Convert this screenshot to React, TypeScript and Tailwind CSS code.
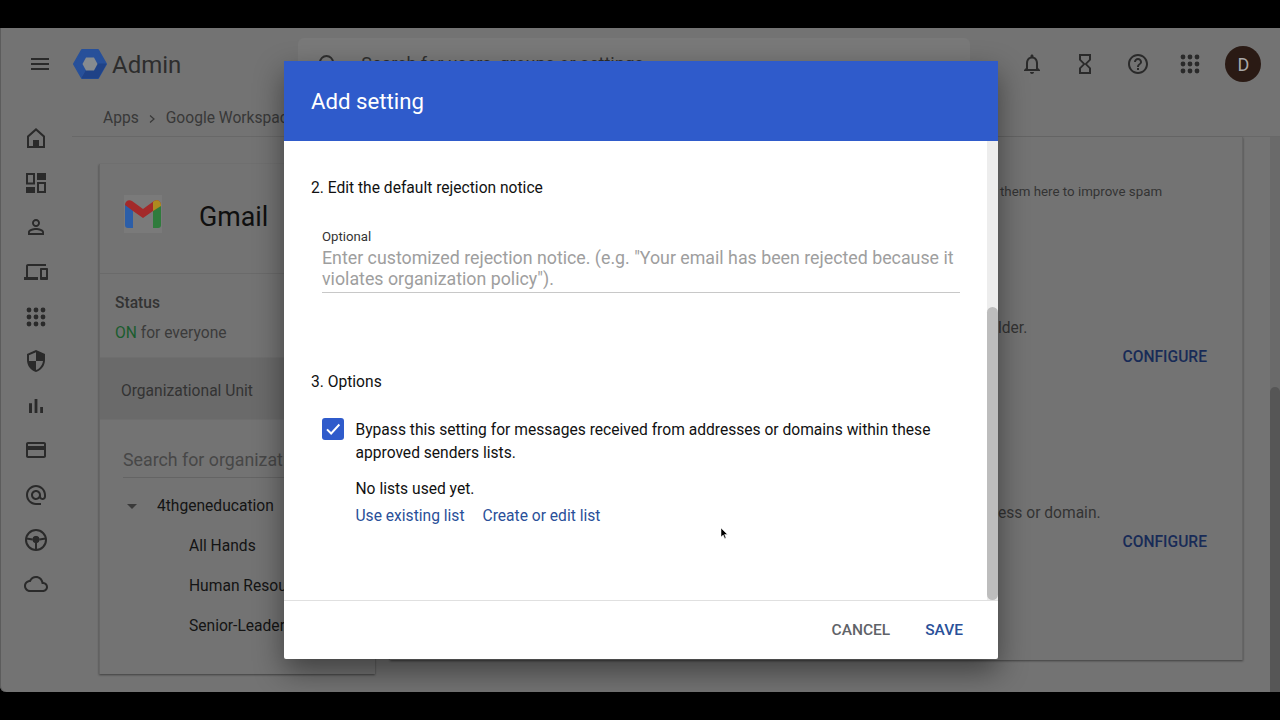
import type { ReactNode } from 'react';

function MatIcon({ d, size = 24 }: { d: string; size?: number }) {
  return (
    <svg width={size} height={size} viewBox="0 0 24 24" fill="currentColor" fillRule="evenodd">
      <path d={d} />
    </svg>
  );
}

function Dots({ size = 24 }: { size?: number }) {
  const spots = [5, 12, 19];
  return (
    <svg width={size} height={size} viewBox="0 0 24 24" fill="currentColor">
      {spots.map((y) => spots.map((x) => <circle key={x + '-' + y} cx={x} cy={y} r="2.4" />))}
    </svg>
  );
}

function Wheel() {
  return (
    <svg width="24" height="24" viewBox="0 0 24 24" fill="currentColor" stroke="currentColor" strokeWidth="2">
      <circle cx="12" cy="12" r="10" fill="none" />
      <circle cx="12" cy="11.5" r="3.2" strokeWidth="1" />
      <path d="M2.5 10.5l6 1M21.5 10.5l-6 1M12 14v8" fill="none" />
    </svg>
  );
}

const paths = {
  menu: 'M3 18h18v-2H3v2zm0-5h18v-2H3v2zm0-7v2h18V6H3z',
  home: 'M12 2L3 10v12h18V10L12 2zm0 2.7l7 6.2V20H5v-9.1l7-6.2zM9 14h6v6H9z',
  dashboard: 'M2 2h9v11.5H2V2zm2 2v7.5h5V4H4zm9-2h9v7h-9V2zm0 9h9v11h-9V11zm2 2v7h5v-7h-5zM2 16h9v6H2v-6z',
  person: 'M12 5.9c1.16 0 2.1.94 2.1 2.1s-.94 2.1-2.1 2.1S9.9 9.16 9.9 8s.94-2.1 2.1-2.1m0 9c2.97 0 6.1 1.46 6.1 2.1v1.1H5.9V17c0-.64 3.13-2.1 6.1-2.1M12 4C9.79 4 8 5.79 8 8s1.79 4 4 4 4-1.79 4-4-1.79-4-4-4zm0 9c-2.67 0-8 1.34-8 4v3h16v-3c0-2.66-5.33-4-8-4z',
  devices: 'M4 6h18V4H4c-1.1 0-2 .9-2 2v11H0v3h14v-3H4V6zm19 2h-6c-.55 0-1 .45-1 1v10c0 .55.45 1 1 1h6c.55 0 1-.45 1-1V9c0-.55-.45-1-1-1zm-1 9h-4v-7h4v7z',
  shield: 'M12 1L3 5v6c0 5.55 3.84 10.74 9 12 5.16-1.26 9-6.45 9-12V5l-9-4zm0 10.99h7c-.53 4.12-3.28 7.79-7 8.94V12H5V6.3l7-3.11v8.8z',
  bars: 'M5 9.2h3V19H5zM10.6 5h2.8v14h-2.8zm5.6 8H19v6h-2.8z',
  card: 'M20 4H4c-1.11 0-1.99.89-1.99 2L2 18c0 1.11.89 2 2 2h16c1.11 0 2-.89 2-2V6c0-1.11-.89-2-2-2zm0 14H4v-6h16v6zm0-10H4V6h16v2z',
  at: 'M12 2C6.48 2 2 6.48 2 12s4.48 10 10 10h5v-2h-5c-4.34 0-8-3.66-8-8s3.66-8 8-8 8 3.66 8 8v1.43c0 .79-.71 1.57-1.5 1.57s-1.5-.78-1.5-1.57V12c0-2.76-2.24-5-5-5s-5 2.24-5 5 2.24 5 5 5c1.38 0 2.64-.56 3.54-1.47.65.89 1.77 1.47 2.96 1.47 1.97 0 3.5-1.6 3.5-3.57V12c0-5.52-4.48-10-10-10zm0 13c-1.66 0-3-1.34-3-3s1.34-3 3-3 3 1.34 3 3-1.34 3-3 3z',
  cloud: 'M19.35 10.04C18.67 6.59 15.64 4 12 4 9.11 4 6.6 5.64 5.35 8.04 2.34 8.36 0 10.91 0 14c0 3.31 2.69 6 6 6h13c2.76 0 5-2.24 5-5 0-2.64-2.05-4.78-4.65-4.96zM19 18H6c-2.21 0-4-1.79-4-4 0-2.05 1.53-3.76 3.56-3.97l1.07-.11.5-.95C8.08 7.14 9.94 6 12 6c2.62 0 4.88 1.86 5.39 4.43l.3 1.5 1.53.11c1.56.1 2.78 1.41 2.78 2.96 0 1.65-1.35 3-3 3z',
  bell: 'M12 22c1.1 0 2-.9 2-2h-4c0 1.1.9 2 2 2zm6-6v-5c0-3.07-1.63-5.64-4.5-6.32V4c0-.83-.67-1.5-1.5-1.5s-1.5.67-1.5 1.5v.68C7.64 5.36 6 7.92 6 11v5l-2 2v1h16v-1l-2-2zm-2 1H8v-6c0-2.48 1.51-4.5 4-4.5s4 2.02 4 4.5v6z',
  hourglass: 'M6 2v6h.01L6 8.01 10 12l-4 4 .01.01H6V22h12v-5.99h-.01L18 16l-4-4 4-3.99-.01-.01H18V2H6zm10 14.5V20H8v-3.5l4-4 4 4zm-4-5l-4-4V4h8v3.5l-4 4z',
  help: 'M11 18h2v-2h-2v2zm1-16C6.48 2 2 6.48 2 12s4.48 10 10 10 10-4.48 10-10S17.52 2 12 2zm0 18c-4.41 0-8-3.59-8-8s3.59-8 8-8 8 3.59 8 8-3.59 8-8 8zm0-14c-2.21 0-4 1.79-4 4h2c0-1.1.9-2 2-2s2 .9 2 2c0 2-3 1.75-3 5h2c0-2.25 3-2.5 3-5 0-2.21-1.79-4-4-4z',
};

const railIcons: ReactNode[] = [
  <MatIcon d={paths.home} />,
  <MatIcon d={paths.dashboard} />,
  <MatIcon d={paths.person} />,
  <MatIcon d={paths.devices} />,
  <Dots />,
  <MatIcon d={paths.shield} />,
  <MatIcon d={paths.bars} />,
  <MatIcon d={paths.card} />,
  <MatIcon d={paths.at} />,
  <Wheel />,
  <MatIcon d={paths.cloud} />,
];

function AdminLogo() {
  return (
    <svg width="34" height="30" viewBox="0 0 34 30">
      <polygon points="9,1 25,1 33,15 25,29 9,29 1,15" fill="#27509a" stroke="#27509a" strokeWidth="2" strokeLinejoin="round" />
      <polygon points="17,15 33,15 25,29 9,29" fill="#1f4287" stroke="#1f4287" strokeWidth="1" strokeLinejoin="round" />
      <polygon points="13,8.5 21,8.5 24.5,15 21,21.5 13,21.5 9.5,15" fill="#868b8f" />
    </svg>
  );
}

function GmailLogo() {
  return (
    <div className="w-[38px] h-[38px] bg-[#7a7a7a] flex items-center justify-center">
      <svg width="36" height="28" viewBox="0 0 36 28">
        <path d="M0 4v21a3 3 0 0 0 3 3h5V9z" fill="#2c5ea8" />
        <path d="M28 9v19h5a3 3 0 0 0 3-3V4z" fill="#2f7b3c" />
        <path d="M0 5C0 1 4-1 7 1l11 8 11-8c3-2 7 0 7 4l-8 6-10 7-10-7z" fill="#a32a2a" />
        <path d="M28 2l1-1c3-2 7 0 7 4v1l-8 5z" fill="#ad8a1f" />
      </svg>
    </div>
  );
}

function OrgRow({ label }: { label: string }) {
  return <div className="h-10 flex items-center pl-[89px] text-[15.6px] text-[#141414] whitespace-nowrap">{label}</div>;
}

function LeftCard() {
  return (
    <div className="w-[276px] h-[510px] mt-[27px] ml-[27px] shrink-0 bg-[#737373] border-l border-[#666666] shadow-[0_1px_2px_rgba(0,0,0,0.45)] overflow-hidden">
      <div className="h-[110px] flex items-center gap-[37px] pl-6 pb-[10px] border-b border-[#6a6a6a]">
        <GmailLogo />
        <span className="mt-2 text-[26.8px] text-[#0f0f0f]">Gmail</span>
      </div>
      <div className="h-[83px] pl-[15px] pt-[19px]">
        <div className="text-[15.6px] leading-5 font-medium text-[#333333]">Status</div>
        <div className="text-[15.6px] leading-5 mt-[10px] text-[#3b3b3b]">
          <span className="text-[#1a5c2e]">ON</span> for everyone
        </div>
      </div>
      <div className="h-[63px] pl-[21px] pt-[6px] flex items-center bg-[#6a6a6a] text-[15.6px] text-[#333333] border-y border-[#6e6e6e]">
        Organizational Unit
      </div>
      <div className="ml-[23px] mr-6 mt-[27px] pb-[3px] border-b border-[#646464] text-[17.8px] text-[#474747] whitespace-nowrap">
        Search for organizational units
      </div>
      <div className="h-10 mt-[9px] flex items-center whitespace-nowrap">
        <span className="ml-[27px] w-0 h-0 border-x-[5px] border-x-transparent border-t-[5px] border-t-[#3a3a3a]" />
        <span className="ml-[20px] text-[15.6px] text-[#141414]">4thgeneducation</span>
      </div>
      <OrgRow label="All Hands" />
      <OrgRow label="Human Resources" />
      <OrgRow label="Senior-Leadership" />
    </div>
  );
}

function RightCard() {
  return (
    <div className="w-[853px] h-[523px] ml-[15px] shrink-0 bg-[#737373] border-r border-[#666666] shadow-[0_1px_2px_rgba(0,0,0,0.45)] pl-[608px] text-[#333333] whitespace-nowrap flex flex-col">
      <div className="mt-[45px] h-5 leading-5 text-[13.3px] pl-[2px]">them here to improve spam</div>
      <div className="mt-[116px] h-5 leading-5 text-[15.6px]">lder.</div>
      <div className="mt-[9px] h-5 leading-5 text-[15.6px] font-medium text-[#182b57] self-end pr-[35px]">CONFIGURE</div>
      <div className="mt-[136px] h-5 leading-5 text-[15.6px]">ess or domain.</div>
      <div className="mt-[9px] h-5 leading-5 text-[15.6px] font-medium text-[#182b57] self-end pr-[35px]">CONFIGURE</div>
    </div>
  );
}

function Dialog() {
  return (
    <div className="absolute left-[284px] top-[61px] w-[714px] h-[598px] bg-white flex flex-col rounded-b-[2px] shadow-[0_12px_30px_rgba(0,0,0,0.45)]">
      <div className="h-20 shrink-0 bg-[#2f5bcb] flex items-center pl-[27px] pt-px text-[22.2px] text-white">Add setting</div>
      <div className="flex-1 flex min-h-0">
        <div className="flex-1 pl-[27px] pr-[27px] text-[15.6px] text-[#111111]">
          <div className="mt-[37px] h-5 leading-5">2. Edit the default rejection notice</div>
          <div className="mt-[31px] ml-[11px] border-b border-[#c8c8c8] pb-[3px]">
            <div className="text-[13.2px] leading-4 text-[#333333]">Optional</div>
            <div className="text-[17.8px] leading-[21px] text-[#9e9e9e] mt-[2px]">
              Enter customized rejection notice. (e.g. "Your email has been rejected because it violates organization policy").
            </div>
          </div>
          <div className="mt-[79px] h-5 leading-5">3. Options</div>
          <div className="mt-[26px] ml-[11px] flex gap-[11.5px]">
            <div className="w-[22px] h-[22px] shrink-0 rounded-[3px] bg-[#2f5bcb] flex items-center justify-center">
              <svg width="18" height="18" viewBox="0 0 24 24" fill="none" stroke="white" strokeWidth="2.6">
                <path d="M4 12.5l5.5 5.5L20.5 6" />
              </svg>
            </div>
            <div className="mt-[1px] leading-[23px]">
              Bypass this setting for messages received from addresses or domains within these approved senders lists.
            </div>
          </div>
          <div className="mt-[14px] ml-[44.5px] h-5 leading-5">No lists used yet.</div>
          <div className="mt-[7px] ml-[44.5px] h-5 leading-5 text-[#2a5099] flex gap-[18px]">
            <span>Use existing list</span>
            <span>Create or edit list</span>
          </div>
        </div>
        <div className="w-[11px] shrink-0 bg-[#ededed] pt-[166px]">
          <div className="h-[293px] rounded-full bg-[#bdbdbd]" />
        </div>
      </div>
      <div className="h-[59px] shrink-0 pt-[2px] border-t border-[#e0e0e0] flex items-center justify-end gap-[35px] pr-[35px] text-[15.5px] font-medium">
        <span className="text-[#5f6368]">CANCEL</span>
        <span className="text-[#2a5099]">SAVE</span>
      </div>
    </div>
  );
}

export default function App() {
  return (
    <div className="relative w-[1280px] h-[720px] bg-black py-7 overflow-hidden font-['Roboto',sans-serif]">
      <div className="h-[664px] bg-[#737373] flex flex-col rounded-bl-md shadow-[inset_1px_0_0_#5c5c5c]">
        <div className="h-[73px] shrink-0 pb-px flex items-center text-[#2a2a2a]">
          <div className="ml-7"><MatIcon d={paths.menu} /></div>
          <div className="ml-[21px]"><AdminLogo /></div>
          <span className="ml-[5px] mt-[2px] text-[24px] text-[#2d2d2d]">Admin</span>
          <div className="ml-[117px] w-[672px] h-[52px] rounded-md bg-[#797979] flex items-center pl-[18px] gap-[21px] text-[17.9px] text-[#2f2f2f]">
            <svg width="24" height="24" viewBox="0 0 24 24" fill="none" stroke="currentColor" strokeWidth="2"><circle cx="10.5" cy="10.5" r="6.5" /><path d="M15.5 15.5L20 20" /></svg>
            <span>Search for users, groups or settings</span>
          </div>
          <div className="ml-[50px]"><MatIcon d={paths.bell} /></div>
          <div className="ml-[29px]"><MatIcon d={paths.hourglass} /></div>
          <div className="ml-[29px]"><MatIcon d={paths.help} /></div>
          <div className="ml-[28px]"><Dots /></div>
          <div className="ml-[23px] w-9 h-9 rounded-full bg-[#2a1a14] text-[#a8a8a8] flex items-center justify-center text-[18px]">D</div>
        </div>
        <div className="flex-1 flex min-h-0">
          <div className="w-[72px] shrink-0 pt-[15px] flex flex-col items-center text-[#2a2a2a]">
            {railIcons.map((icon, i) => (
              <div key={i} className="h-[44.6px] flex items-center justify-center">{icon}</div>
            ))}
          </div>
          <div className="flex-1 flex flex-col min-w-0">
            <div className="h-9 shrink-0 border-b border-[#686868] pl-[31px] flex items-center gap-[8.5px] text-[15.6px] text-[#383838] whitespace-nowrap">
              <span>Apps</span>
              <svg width="10" height="10" viewBox="0 0 10 10" fill="none" stroke="currentColor" strokeWidth="1.2"><path d="M3 1.5L7 5 3 8.5" /></svg>
              <span>Google Workspace</span>
            </div>
            <div className="flex-1 flex min-h-0">
              <LeftCard />
              <RightCard />
              <div className="ml-auto w-[10px] bg-[#6a6a6a] pt-[250px]">
                <div className="h-[305px] rounded-t-full bg-[#565656]" />
              </div>
            </div>
          </div>
        </div>
      </div>
      <Dialog />
      <svg className="absolute left-[720px] top-[527px]" width="9" height="13" viewBox="0 0 9 13">
        <path d="M1 1v9l2.2-2 1.5 3.5 1.3-.6L4.6 7.5H7.5z" fill="black" stroke="white" strokeWidth="0.5" />
      </svg>
    </div>
  );
}
